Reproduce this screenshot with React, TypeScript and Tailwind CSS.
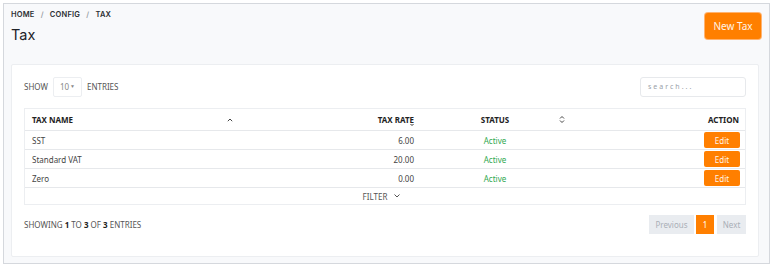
const rows = [
  { name: 'SST', rate: '6.00' },
  { name: 'Standard VAT', rate: '20.00' },
  { name: 'Zero', rate: '0.00' },
];

const cols = 'grid grid-cols-[216px_180px_150px_1fr]';

const App = () => {
  return (
    <div className="bg-white w-[775px] h-[270px] p-[3px] font-['Noto_Sans',sans-serif]">
      <div className="w-[767px] h-[261px] border border-[#d5d8dd] bg-[#f8f9fb] pl-[7px] pr-[9px] pt-[5px]">
        {/* header */}
        <div className="flex items-start justify-between">
          <div className="font-['Inter',sans-serif]">
            <p className="text-[7.5px] font-semibold text-[#2b2f33] tracking-[0.2px] leading-[11px]">
              HOME <span className="text-[#9aa0a6] mx-[4px]">/</span> CONFIG{' '}
              <span className="text-[#9aa0a6] mx-[4px]">/</span> TAX
            </p>
            <h1 className="text-[14.5px] text-[#1f2328] leading-[20px] mt-[5px]">Tax</h1>
          </div>
          <button className="w-[56px] h-[26px] rounded-[3px] bg-[#ff7f00] text-[#fff3e6] text-[10px] mt-[4px] mr-[-1px] shadow-[0_0_0_1px_#ffb370]">
            New Tax
          </button>
        </div>

        {/* card */}
        <div className="mt-[19px] mr-[1px] h-[193px] bg-white border border-[#eceef1] rounded-[2px] px-[12px] pt-[12px]">
          <div className="flex items-center justify-between h-[20px]">
            <div className="flex items-center text-[8px] text-[#555] gap-[5px]">
              <span>SHOW</span>
              <div className="w-[29px] h-[20px] border border-[#eceef1] rounded-[2px] flex items-center justify-center text-[#888]">
                10<span className="text-[5px] ml-[1px]">▼</span>
              </div>
              <span>ENTRIES</span>
            </div>
            <div className="w-[106px] h-[20px] border border-[#e7e9ec] rounded-[3px] flex items-center px-[7px] text-[7px] text-[#9aa0a8] tracking-[2px]">
              search...
            </div>
          </div>

          {/* table */}
          <div className="mt-[11px] border border-[#eceef1] text-[8px] leading-[11px]">
            <div className={`${cols} h-[22px] items-center font-bold text-[#222] border-b border-[#e6e8eb]`}>
              <div className="pl-[7px] flex items-center justify-between pr-[8px]">
                <span>TAX NAME</span>
                <svg width="6" height="4" viewBox="0 0 6 4">
                  <path d="M0.8 3.2 L3 1 L5.2 3.2" stroke="#444" strokeWidth="1" fill="none" />
                </svg>
              </div>
              <div className="text-right pr-[7px] relative">
                TAX RATE
                <svg className="absolute right-[6px] top-[3px]" width="6" height="9" viewBox="0 0 6 9">
                  <path d="M1.5 7 L3 8.5 L4.5 7" stroke="#333" strokeWidth="1" fill="none" />
                </svg>
              </div>
              <div className="relative text-center pr-[2px]">
                STATUS
                <svg className="absolute right-[6px] top-[1px]" width="6" height="9" viewBox="0 0 6 9">
                  <path d="M1 3.5 L3 1.5 L5 3.5 M1 5.5 L3 7.5 L5 5.5" stroke="#444" strokeWidth="1" fill="none" />
                </svg>
              </div>
              <div className="text-right pr-[6px]">ACTION</div>
            </div>
            {rows.map((r) => (
              <div key={r.name} className={`${cols} h-[19px] items-center text-[#444] border-b border-[#e6e8eb]`}>
                <div className="pl-[7px]">{r.name}</div>
                <div className="text-right pr-[7px]">{r.rate}</div>
                <div className="text-center text-[#2fa84f] pr-[2px]">Active</div>
                <div className="flex justify-end pr-[5px]">
                  <button className="w-[36px] h-[16px] rounded-[2px] bg-[#ff7f00] text-[#fff3e6] text-[8px]">Edit</button>
                </div>
              </div>
            ))}
            <div className="h-[16px] flex items-center justify-center text-[#555] gap-[7px] pr-[7px]">
              <span>FILTER</span>
              <svg width="6" height="4" viewBox="0 0 6 4">
                <path d="M0.5 0.5 L3 3 L5.5 0.5" stroke="#555" strokeWidth="1" fill="none" />
              </svg>
            </div>
          </div>

          <div className="flex items-center justify-between mt-[10px]">
            <p className="text-[8px] text-[#555]">
              SHOWING <b className="text-[#222]">1</b> TO <b className="text-[#222]">3</b> OF{' '}
              <b className="text-[#222]">3</b> ENTRIES
            </p>
            <div className="flex items-center gap-[2px] text-[8px]">
              <div className="w-[45px] h-[19px] bg-[#e9ecf0] text-[#a9afb7] flex items-center justify-center">Previous</div>
              <div className="w-[18px] h-[19px] bg-[#ff7f00] text-white flex items-center justify-center">1</div>
              <div className="w-[29px] h-[19px] bg-[#e9ecf0] text-[#a9afb7] flex items-center justify-center ml-[1px]">Next</div>
            </div>
          </div>
        </div>
      </div>
    </div>
  );
};

export default App;
